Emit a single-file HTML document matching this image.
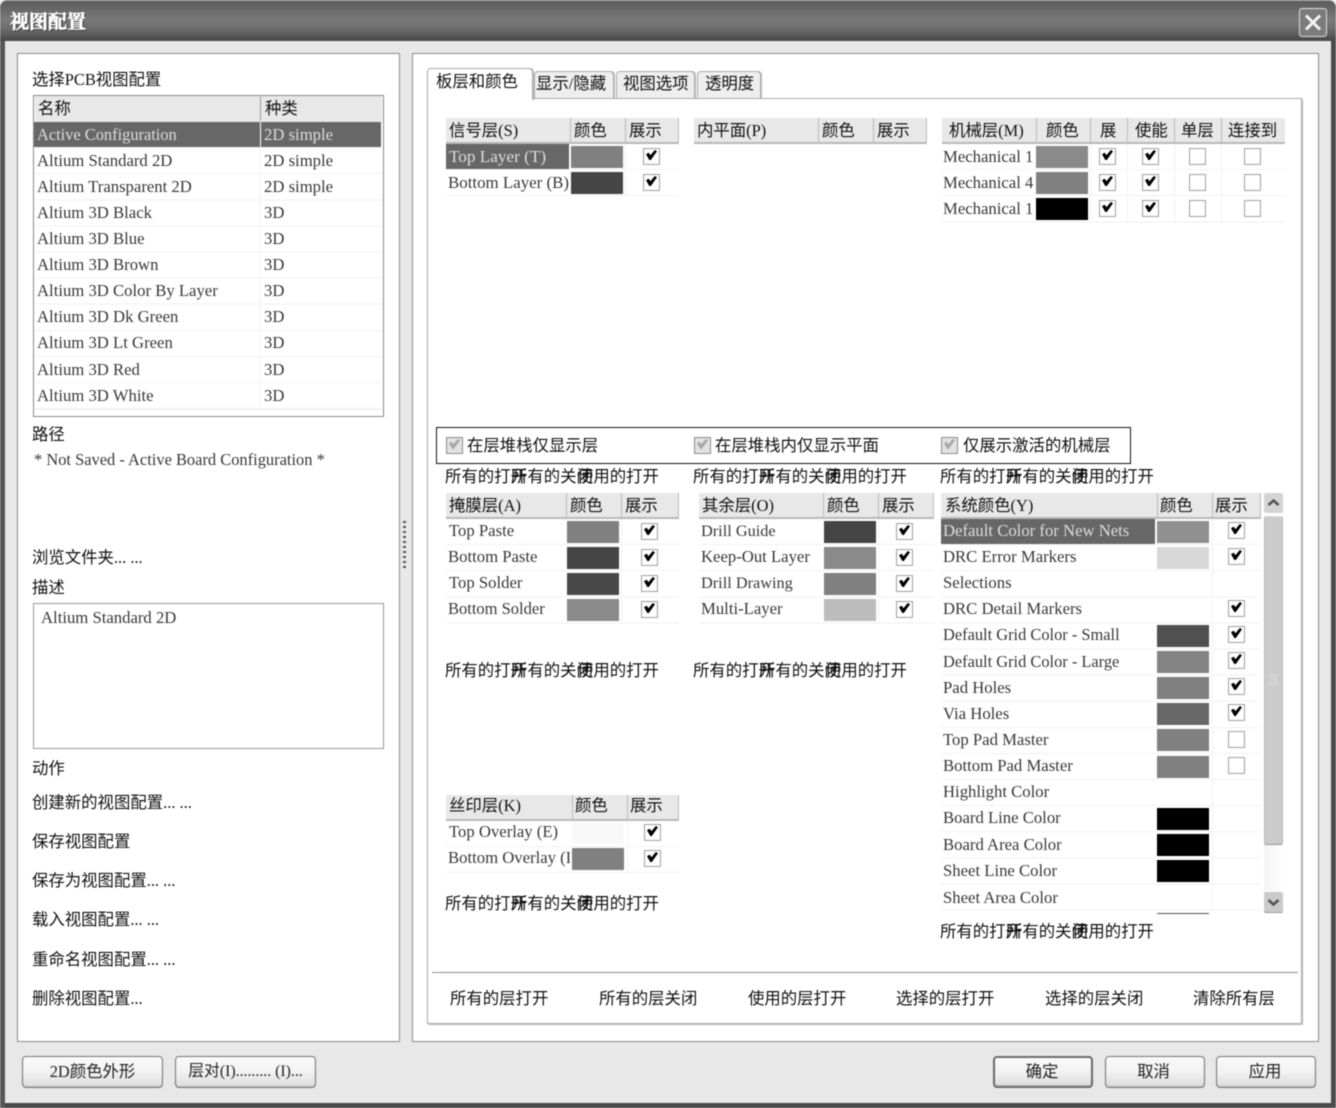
<!DOCTYPE html>
<html lang="zh"><head><meta charset="utf-8"><title>视图配置</title>
<style>
html,body{margin:0;padding:0;background:#fff}
#w{position:relative;width:1336px;height:1108px;overflow:hidden;background:#e8e8e8;font-family:"Liberation Serif","Noto Sans CJK SC",serif;font-size:16.7px;color:#2c2c2c;filter:blur(.45px)}
#w div,#w b,#w span{position:absolute;display:block;font-weight:normal}
.t{white-space:nowrap;line-height:20px;height:20px;margin-top:1px}
.c{font-family:"Liberation Serif","Noto Sans CJK SC",sans-serif;font-size:16.4px;color:#111}
.l{color:#383838}
.p{background:#fff;border:1px solid #8c8c8c;box-sizing:border-box}
.hd{background:#e8e8e8;box-shadow:inset 0 -2px 0 #b8b8b8;height:26px}
.g{background:repeating-linear-gradient(#fff 0 25.1px,#f1f1f1 25.1px 26.1px)}
.d{width:1px;background:#bcbcbc;height:26px}
.v{width:1px;background:#f1f1f1}
.s{width:52px;height:22px}
.sel{background:#676767;height:25px}
.w{color:#ddd}
.k{width:15px;height:15px;border:1px solid #a4a4a4;background:#fff;box-shadow:inset 0 0 1px #ddd}
.k.o::after{content:"";position:absolute;left:2px;top:1px;width:11px;height:10px;background:#000;clip-path:polygon(0 42%,25% 26%,40% 52%,80% 0,100% 12%,44% 100%,30% 100%)}
.k.x{background:#e2e2e2;border-color:#8c8c8c}
.k.x::after{background:#a8a8a8}
.btn{height:30px;border:1px solid #777;border-radius:4px;background:linear-gradient(#fafafa,#f2f2f2 50%,#dcdcdc);box-shadow:inset 0 -1px 1px #bbb;line-height:30px;text-align:center;font-family:"Liberation Serif","Noto Sans CJK SC",sans-serif;font-size:16.4px;color:#222;white-space:nowrap}
.clip{overflow:hidden}
.tab{background:#eee;border:1px solid #aaa;border-bottom:0;border-radius:4px 4px 0 0;box-sizing:border-box;box-shadow:1px 0 0 #bbb}
#w .ti{font-weight:700;font-family:"Liberation Serif","Noto Serif CJK SC",serif;font-size:19px;color:#fff;-webkit-text-stroke:.6px #fff;text-shadow:1px 1px 1px #222;line-height:22px;height:22px}
</style></head><body><div id="w">
<!-- frame -->
<div style="left:0;top:0;width:1336px;height:1108px;border-radius:8px 8px 0 0;background:#e8e8e8;box-shadow:inset 5px 0 0 #565656,inset -5px 0 0 #4c4c4c,inset 0 -5px 0 #484848"></div>
<div style="left:0;top:0;width:1336px;height:41px;border-radius:8px 8px 0 0;background:linear-gradient(#8a8a8a 0,#5e5e5e 2px,#666 8px,#7a7a7a 20px,#6a6a6a 30px,#4a4a4a 40px)"></div>
<div class="t ti" style="left:10px;top:11px">视图配置</div>
<div style="left:1299px;top:8px;width:26px;height:27px;border:1px solid #ddd;border-radius:3px;background:#7c7c7c"></div>
<svg style="position:absolute;left:1299px;top:8px" width="28" height="29" viewBox="0 0 28 29"><path d="M7 7.5L21 21.5M21 7.5L7 21.5" stroke="#f4f4f4" stroke-width="3" fill="none"/></svg>

<!-- left panel -->
<div class="p" style="left:17px;top:53px;width:383px;height:989px"></div>
<div class="t c" style="left:32px;top:69px">选择PCB视图配置</div>
<div style="left:33px;top:95px;width:351px;height:322px;border:1px solid #888;box-sizing:border-box;background:#fff"></div>
<div class="g" style="left:35px;top:122px;width:347px;height:287px"></div>
<div style="left:35px;top:96px;width:347px;height:26px;background:#e8e8e8"></div>
<div class="d" style="left:260px;top:97px;height:24px;background:#999"></div>
<div class="v" style="left:260px;top:148px;height:260px"></div>
<div style="left:35px;top:409px;width:347px;height:7px;background:#fff;border-top:1px solid #eee;box-sizing:border-box"></div>
<div class="t c" style="left:38px;top:98px">名称</div>
<div class="t c" style="left:265px;top:98px">种类</div>
<div class="sel" style="left:34px;top:122px;width:226px"></div>
<div class="sel" style="left:261px;top:122px;width:120px"></div>
<div class="t w" style="left:37px;top:124px;font-size:16.4px">Active Configuration</div><div class="t w" style="left:264px;top:124px">2D simple</div>
<div class="t l" style="left:37px;top:150px">Altium Standard 2D</div><div class="t l" style="left:264px;top:150px">2D simple</div>
<div class="t l" style="left:37px;top:176px">Altium Transparent 2D</div><div class="t l" style="left:264px;top:176px">2D simple</div>
<div class="t l" style="left:37px;top:202px">Altium 3D Black</div><div class="t l" style="left:264px;top:202px">3D</div>
<div class="t l" style="left:37px;top:228px">Altium 3D Blue</div><div class="t l" style="left:264px;top:228px">3D</div>
<div class="t l" style="left:37px;top:254px">Altium 3D Brown</div><div class="t l" style="left:264px;top:254px">3D</div>
<div class="t l" style="left:37px;top:280px">Altium 3D Color By Layer</div><div class="t l" style="left:264px;top:280px">3D</div>
<div class="t l" style="left:37px;top:306px">Altium 3D Dk Green</div><div class="t l" style="left:264px;top:306px">3D</div>
<div class="t l" style="left:37px;top:332px">Altium 3D Lt Green</div><div class="t l" style="left:264px;top:332px">3D</div>
<div class="t l" style="left:37px;top:359px">Altium 3D Red</div><div class="t l" style="left:264px;top:359px">3D</div>
<div class="t l" style="left:37px;top:385px">Altium 3D White</div><div class="t l" style="left:264px;top:385px">3D</div>

<div class="t c" style="left:32px;top:424px">路径</div>
<div class="t l" style="left:34px;top:449px;font-size:16.45px">* Not Saved - Active Board Configuration *</div>
<div class="t c" style="left:32px;top:547px">浏览文件夹... ...</div>
<div class="t c" style="left:32px;top:577px">描述</div>
<div style="left:33px;top:603px;width:351px;height:146px;border:1px solid #999;box-sizing:border-box;background:#fff"></div>
<div class="t l" style="left:41px;top:607px">Altium Standard 2D</div>
<div class="t c" style="left:32px;top:758px">动作</div>
<div class="t c" style="left:32px;top:792px">创建新的视图配置... ...</div>
<div class="t c" style="left:32px;top:831px">保存视图配置</div>
<div class="t c" style="left:32px;top:870px">保存为视图配置... ...</div>
<div class="t c" style="left:32px;top:909px">载入视图配置... ...</div>
<div class="t c" style="left:32px;top:949px">重命名视图配置... ...</div>
<div class="t c" style="left:32px;top:988px">删除视图配置...</div>

<!-- splitter -->
<div style="left:403px;top:521px;width:3px;height:48px;background:repeating-linear-gradient(#555 0 2px,transparent 2px 5px)"></div>

<!-- right panel -->
<div class="p" style="left:412px;top:53px;width:907px;height:989px"></div>
<div style="left:427px;top:98px;width:875px;height:926px;background:#fff;border:1px solid #a8a8a8;box-sizing:border-box;box-shadow:1px 1px 1px #bbb"></div>
<div class="tab" style="left:534px;top:71px;width:80px;height:27px"></div>
<div class="tab" style="left:616px;top:71px;width:79px;height:27px"></div>
<div class="tab" style="left:697px;top:71px;width:64px;height:27px"></div>
<div class="tab" style="left:427px;top:68px;width:106px;height:32px;background:#fff;border-color:#a8a8a8"></div>
<div class="t c" style="left:436px;top:71px">板层和颜色</div>
<div class="t c" style="left:536px;top:73px">显示/隐藏</div>
<div class="t c" style="left:623px;top:73px">视图选项</div>
<div class="t c" style="left:705px;top:73px">透明度</div>

<!-- signal -->
<div class="g" style="left:446px;top:144px;width:233px;height:52px"></div>
<div class="hd" style="left:446px;top:118px;width:233px"></div>
<div class="d" style="left:570px;top:118px"></div><div class="d" style="left:625px;top:118px"></div><div class="d" style="left:678px;top:118px"></div>
<div class="v" style="left:625px;top:144px;height:52px"></div>
<div class="t c" style="left:449px;top:120px">信号层(S)</div><div class="t c" style="left:574px;top:120px">颜色</div><div class="t c" style="left:629px;top:120px">展示</div>
<div class="sel" style="left:446px;top:144px;width:123px"></div>
<div class="t w" style="left:449px;top:146px;font-size:17.2px">Top Layer (T)</div>
<div class="t l" style="left:448px;top:172px;font-size:16.9px">Bottom Layer (B)</div>
<div class="s" style="left:571px;top:146px;background:#808080"></div>
<div class="s" style="left:571px;top:172px;background:#454545"></div>
<div class="k o" style="left:643px;top:148px"></div><div class="k o" style="left:643px;top:174px"></div>

<!-- plane -->
<div class="hd" style="left:694px;top:118px;width:233px"></div>
<div class="d" style="left:818px;top:118px"></div><div class="d" style="left:873px;top:118px"></div><div class="d" style="left:926px;top:118px"></div>
<div class="t c" style="left:697px;top:120px">内平面(P)</div><div class="t c" style="left:822px;top:120px">颜色</div><div class="t c" style="left:877px;top:120px">展示</div>

<!-- mech -->
<div class="g" style="left:942px;top:144px;width:343px;height:79px"></div>
<div class="hd" style="left:942px;top:118px;width:343px"></div>
<div class="d" style="left:1036px;top:118px"></div><div class="d" style="left:1090px;top:118px"></div><div class="d" style="left:1127px;top:118px"></div><div class="d" style="left:1174px;top:118px"></div><div class="d" style="left:1221px;top:118px"></div>
<div class="v" style="left:1090px;top:144px;height:78px"></div><div class="v" style="left:1127px;top:144px;height:78px"></div><div class="v" style="left:1174px;top:144px;height:78px"></div><div class="v" style="left:1221px;top:144px;height:78px"></div>
<div class="t c" style="left:949px;top:120px">机械层(M)</div><div class="t c" style="left:1046px;top:120px">颜色</div><div class="t c" style="left:1100px;top:120px">展</div><div class="t c" style="left:1135px;top:120px">使能</div><div class="t c" style="left:1181px;top:120px">单层</div><div class="t c" style="left:1228px;top:120px">连接到</div>
<div class="t l clip" style="left:943px;top:146px;width:90px">Mechanical 1</div>
<div class="t l clip" style="left:943px;top:172px;width:90px">Mechanical 4</div>
<div class="t l clip" style="left:943px;top:198px;width:90px">Mechanical 16</div>
<div class="s" style="left:1036px;top:146px;background:#8a8a8a"></div>
<div class="s" style="left:1036px;top:172px;background:#808080"></div>
<div class="s" style="left:1036px;top:198px;background:#000"></div>
<div class="k o" style="left:1099px;top:148px"></div><div class="k o" style="left:1142px;top:148px"></div><div class="k" style="left:1189px;top:148px"></div><div class="k" style="left:1244px;top:148px"></div>
<div class="k o" style="left:1099px;top:174px"></div><div class="k o" style="left:1142px;top:174px"></div><div class="k" style="left:1189px;top:174px"></div><div class="k" style="left:1244px;top:174px"></div>
<div class="k o" style="left:1099px;top:200px"></div><div class="k o" style="left:1142px;top:200px"></div><div class="k" style="left:1189px;top:200px"></div><div class="k" style="left:1244px;top:200px"></div>

<!-- options box -->
<div style="left:436px;top:427px;width:695px;height:37px;border:1px solid #111;box-sizing:border-box"></div>
<div class="k o x" style="left:446px;top:437px"></div><div class="t c" style="left:467px;top:435px">在层堆栈仅显示层</div>
<div class="k o x" style="left:694px;top:437px"></div><div class="t c" style="left:715px;top:435px">在层堆栈内仅显示平面</div>
<div class="k o x" style="left:941px;top:437px"></div><div class="t c" style="left:963px;top:435px">仅展示激活的机械层</div>

<!-- overlapped link rows -->
<div class="t c" style="left:445px;top:466px">所有的打开</div><div class="t c" style="left:511px;top:466px">所有的关闭</div><div class="t c" style="left:577px;top:466px">使用的打开</div>
<div class="t c" style="left:693px;top:466px">所有的打开</div><div class="t c" style="left:759px;top:466px">所有的关闭</div><div class="t c" style="left:825px;top:466px">使用的打开</div>
<div class="t c" style="left:940px;top:466px">所有的打开</div><div class="t c" style="left:1006px;top:466px">所有的关闭</div><div class="t c" style="left:1072px;top:466px">使用的打开</div>
<div class="t c" style="left:445px;top:660px">所有的打开</div><div class="t c" style="left:511px;top:660px">所有的关闭</div><div class="t c" style="left:577px;top:660px">使用的打开</div>
<div class="t c" style="left:693px;top:660px">所有的打开</div><div class="t c" style="left:759px;top:660px">所有的关闭</div><div class="t c" style="left:825px;top:660px">使用的打开</div>
<div class="t c" style="left:445px;top:893px">所有的打开</div><div class="t c" style="left:511px;top:893px">所有的关闭</div><div class="t c" style="left:577px;top:893px">使用的打开</div>
<div class="t c" style="left:940px;top:921px">所有的打开</div><div class="t c" style="left:1006px;top:921px">所有的关闭</div><div class="t c" style="left:1072px;top:921px">使用的打开</div>

<!-- mask -->
<div class="g" style="left:446px;top:519px;width:233px;height:105px"></div>
<div class="hd" style="left:446px;top:493px;width:233px"></div>
<div class="d" style="left:566px;top:493px"></div><div class="d" style="left:621px;top:493px"></div><div class="d" style="left:678px;top:493px"></div>
<div class="v" style="left:621px;top:519px;height:105px"></div>
<div class="t c" style="left:449px;top:495px">掩膜层(A)</div><div class="t c" style="left:570px;top:495px">颜色</div><div class="t c" style="left:625px;top:495px">展示</div>
<div class="t l" style="left:449px;top:520px">Top Paste</div><div class="t l" style="left:448px;top:546px">Bottom Paste</div><div class="t l" style="left:449px;top:572px">Top Solder</div><div class="t l" style="left:448px;top:598px;font-size:16.5px">Bottom Solder</div>
<div class="s" style="left:567px;top:521px;background:#808080"></div><div class="s" style="left:567px;top:547px;background:#444"></div><div class="s" style="left:567px;top:573px;background:#484848"></div><div class="s" style="left:567px;top:599px;background:#8a8a8a"></div>
<div class="k o" style="left:641px;top:523px"></div><div class="k o" style="left:641px;top:549px"></div><div class="k o" style="left:641px;top:575px"></div><div class="k o" style="left:641px;top:601px"></div>

<!-- other -->
<div class="g" style="left:699px;top:519px;width:235px;height:105px"></div>
<div class="hd" style="left:699px;top:493px;width:235px"></div>
<div class="d" style="left:823px;top:493px"></div><div class="d" style="left:878px;top:493px"></div><div class="d" style="left:933px;top:493px"></div>
<div class="v" style="left:878px;top:519px;height:105px"></div>
<div class="t c" style="left:702px;top:495px">其余层(O)</div><div class="t c" style="left:827px;top:495px">颜色</div><div class="t c" style="left:882px;top:495px">展示</div>
<div class="t l" style="left:701px;top:520px;font-size:16.3px">Drill Guide</div><div class="t l" style="left:701px;top:546px">Keep-Out Layer</div><div class="t l" style="left:701px;top:572px;font-size:16.3px">Drill Drawing</div><div class="t l" style="left:701px;top:598px">Multi-Layer</div>
<div class="s" style="left:824px;top:521px;background:#444"></div><div class="s" style="left:824px;top:547px;background:#8a8a8a"></div><div class="s" style="left:824px;top:573px;background:#808080"></div><div class="s" style="left:824px;top:599px;background:#bcbcbc"></div>
<div class="k o" style="left:896px;top:523px"></div><div class="k o" style="left:896px;top:549px"></div><div class="k o" style="left:896px;top:575px"></div><div class="k o" style="left:896px;top:601px"></div>

<!-- silkscreen -->
<div class="g" style="left:446px;top:821px;width:233px;height:53px"></div>
<div class="hd" style="left:446px;top:795px;width:233px"></div>
<div class="d" style="left:572px;top:795px"></div><div class="d" style="left:627px;top:795px"></div><div class="d" style="left:678px;top:795px"></div>
<div class="v" style="left:627px;top:821px;height:52px"></div>
<div class="t c" style="left:449px;top:795px">丝印层(K)</div><div class="t c" style="left:575px;top:795px">颜色</div><div class="t c" style="left:630px;top:795px">展示</div>
<div class="t l" style="left:449px;top:821px">Top Overlay (E)</div>
<div class="t l clip" style="left:448px;top:847px;width:122px">Bottom Overlay (L)</div>
<div class="s" style="left:572px;top:822px;background:#f8f8f8"></div>
<div class="s" style="left:572px;top:848px;background:#808080"></div>
<div class="k o" style="left:644px;top:824px"></div><div class="k o" style="left:644px;top:850px"></div>

<!-- system -->
<div class="g" style="left:941px;top:519px;width:320px;height:392px"></div>
<div class="hd" style="left:941px;top:493px;width:320px"></div>
<div class="d" style="left:1157px;top:493px"></div><div class="d" style="left:1212px;top:493px"></div><div class="d" style="left:1260px;top:493px"></div>
<div class="v" style="left:1212px;top:519px;height:392px"></div>
<div class="t c" style="left:945px;top:495px">系统颜色(Y)</div><div class="t c" style="left:1160px;top:495px">颜色</div><div class="t c" style="left:1215px;top:495px">展示</div>
<div class="sel" style="left:941px;top:519px;width:214px"></div>
<div class="t w" style="left:943px;top:520px">Default Color for New Nets</div>
<div class="t l" style="left:943px;top:546px">DRC Error Markers</div>
<div class="t l" style="left:943px;top:572px">Selections</div>
<div class="t l" style="left:943px;top:598px">DRC Detail Markers</div>
<div class="t l" style="left:943px;top:624px;font-size:16.4px">Default Grid Color - Small</div>
<div class="t l" style="left:943px;top:651px;font-size:16.4px">Default Grid Color - Large</div>
<div class="t l" style="left:943px;top:677px">Pad Holes</div>
<div class="t l" style="left:943px;top:703px">Via Holes</div>
<div class="t l" style="left:943px;top:729px">Top Pad Master</div>
<div class="t l" style="left:943px;top:755px">Bottom Pad Master</div>
<div class="t l" style="left:943px;top:781px">Highlight Color</div>
<div class="t l" style="left:943px;top:807px">Board Line Color</div>
<div class="t l" style="left:943px;top:834px">Board Area Color</div>
<div class="t l" style="left:943px;top:860px">Sheet Line Color</div>
<div class="t l" style="left:943px;top:887px">Sheet Area Color</div>
<div class="s" style="left:1157px;top:521px;background:#909090"></div>
<div class="s" style="left:1157px;top:547px;background:#d8d8d8"></div>
<div class="s" style="left:1157px;top:625px;background:#505050"></div>
<div class="s" style="left:1157px;top:651px;background:#838383"></div>
<div class="s" style="left:1157px;top:677px;background:#808080"></div>
<div class="s" style="left:1157px;top:703px;background:#676767"></div>
<div class="s" style="left:1157px;top:729px;background:#808080"></div>
<div class="s" style="left:1157px;top:756px;background:#808080"></div>
<div class="s" style="left:1157px;top:808px;background:#000"></div>
<div class="s" style="left:1157px;top:834px;background:#000"></div>
<div class="s" style="left:1157px;top:860px;background:#000"></div>
<div style="left:1157px;top:913px;width:52px;height:1px;background:#555"></div>
<div class="k o" style="left:1228px;top:522px"></div>
<div class="k o" style="left:1228px;top:548px"></div>
<div class="k o" style="left:1228px;top:600px"></div>
<div class="k o" style="left:1228px;top:626px"></div>
<div class="k o" style="left:1228px;top:652px"></div>
<div class="k o" style="left:1228px;top:678px"></div>
<div class="k o" style="left:1228px;top:704px"></div>
<div class="k" style="left:1228px;top:731px"></div>
<div class="k" style="left:1228px;top:757px"></div>

<!-- scrollbar -->
<div style="left:1264px;top:516px;width:20px;height:396px;background:linear-gradient(90deg,#f4f4f4,#fff)"></div>
<div style="left:1264px;top:493px;width:19px;height:20px;background:#d4d4d4;border-radius:2px"></div>
<svg style="position:absolute;left:1264px;top:493px" width="19" height="20" viewBox="0 0 19 20"><path d="M4.5 12L9.5 7.5L14.5 12" stroke="#555" stroke-width="2.6" fill="none"/></svg>
<div style="left:1264px;top:516px;width:19px;height:329px;background:#cbcbcb;border:1px solid #bbb;border-top-color:#ddd;border-bottom-color:#999;border-radius:2px;box-sizing:border-box"></div>
<div style="left:1269px;top:675px;width:9px;height:9px;background:repeating-linear-gradient(#e8e8e8 0 1px,#bbb 1px 2px)"></div>
<div style="left:1264px;top:892px;width:19px;height:20px;background:#cacaca;border-radius:2px;box-shadow:0 1px 0 #999"></div>
<svg style="position:absolute;left:1264px;top:892px" width="19" height="20" viewBox="0 0 19 20"><path d="M4.5 8L9.5 12.5L14.5 8" stroke="#555" stroke-width="2.6" fill="none"/></svg>

<!-- bottom actions -->
<div style="left:432px;top:972px;width:866px;height:1px;background:#8c8c8c"></div>
<div class="t c" style="left:450px;top:988px">所有的层打开</div>
<div class="t c" style="left:599px;top:988px">所有的层关闭</div>
<div class="t c" style="left:748px;top:988px">使用的层打开</div>
<div class="t c" style="left:896px;top:988px">选择的层打开</div>
<div class="t c" style="left:1045px;top:988px">选择的层关闭</div>
<div class="t c" style="left:1193px;top:988px">清除所有层</div>

<!-- buttons -->
<div class="btn" style="left:22px;top:1056px;width:139px">2D颜色外形</div>
<div class="btn" style="left:175px;top:1056px;width:139px;font-size:15.8px">层对(I)......... (I)...</div>
<div class="btn" style="left:993px;top:1056px;width:96px;border:2px solid #6c6c6c;height:28px;line-height:28px;text-indent:-2px">确定</div>
<div class="btn" style="left:1105px;top:1056px;width:98px;text-indent:-3px">取消</div>
<div class="btn" style="left:1216px;top:1056px;width:98px;text-indent:-2px">应用</div>
</div></body></html>
